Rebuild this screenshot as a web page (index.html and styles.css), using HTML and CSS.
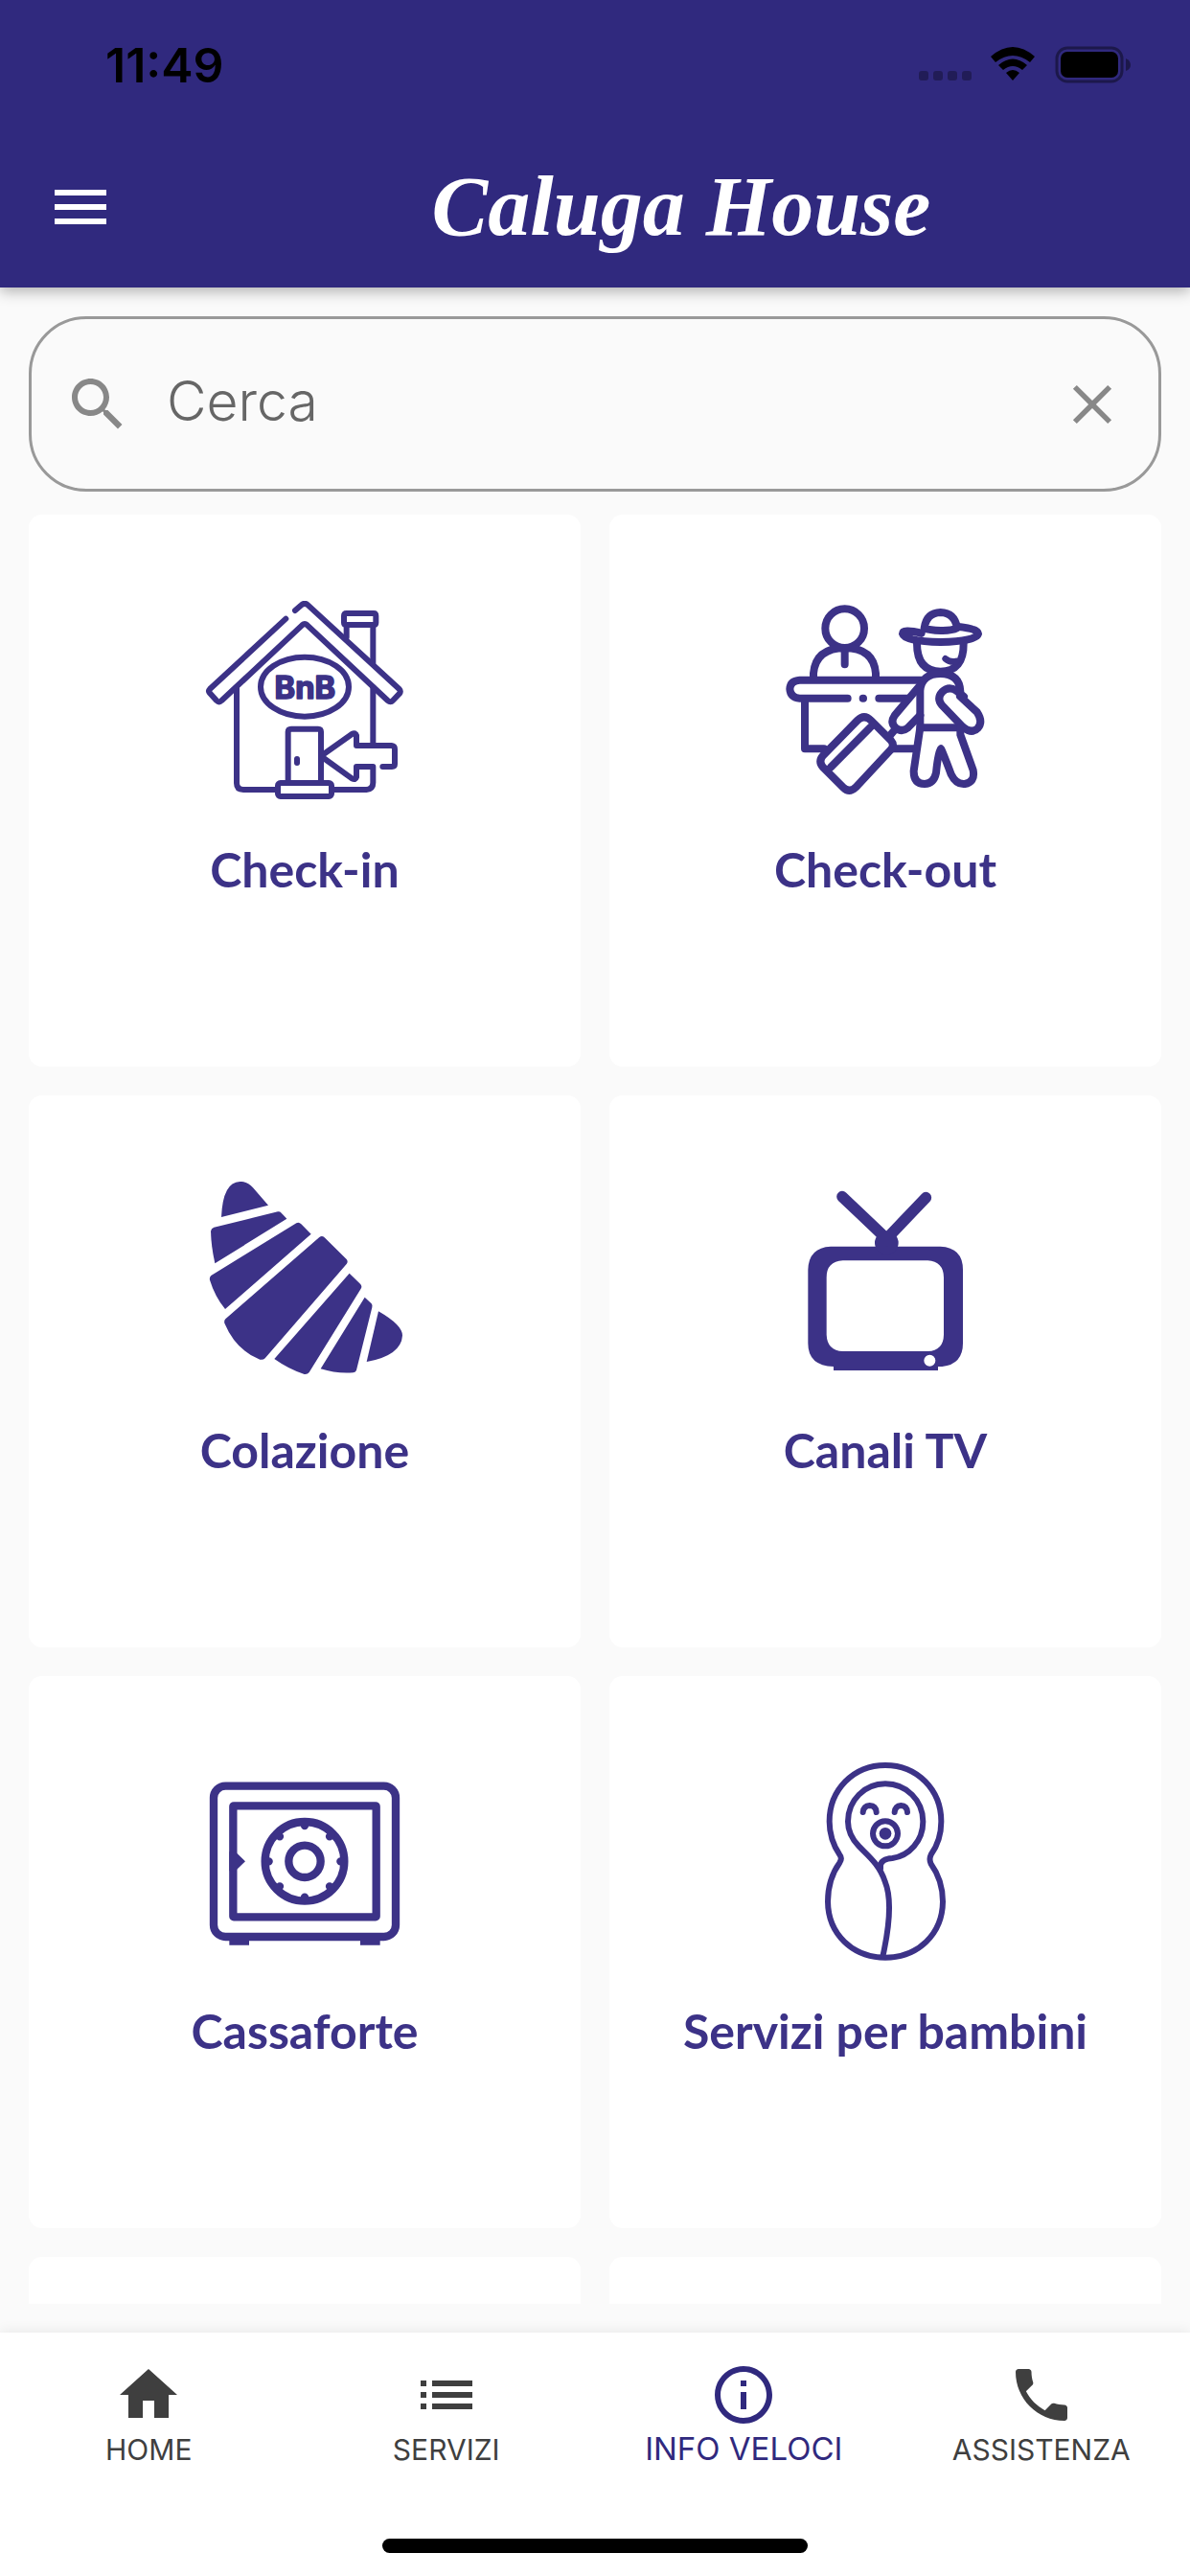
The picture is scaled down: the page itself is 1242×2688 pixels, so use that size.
FILE: index.html
```
<!DOCTYPE html>
<html lang="it">
<head>
  <meta charset="UTF-8" />
  <meta name="viewport" content="width=device-width, initial-scale=1.0"/>
  <title>Caluga House</title>
  <link rel="stylesheet" href="styles.css">
</head>
<body>
  <header>
    <div class="status-bar">
      <span class="clock">11:49</span>
      <svg class="status-icons" viewBox="0 0 224 40" aria-hidden="true">
        <g opacity="0.3">
          <rect x="3" y="26" width="10" height="10" rx="3"/>
          <rect x="18" y="26" width="10" height="10" rx="3"/>
          <rect x="33" y="26" width="10" height="10" rx="3"/>
          <rect x="48" y="26" width="10" height="10" rx="3"/>
        </g>
        <path d="M78 11 Q101 -9 124 11 L119 17 Q101 3 83 17 Z"/>
        <path d="M86 20 Q101 7 116 20 L111 25 Q101 17 91 25 Z"/>
        <path d="M94 28 Q101 22 108 28 L101 36 Z"/>
        <rect x="147" y="2" width="68" height="35" rx="11" fill="none" stroke="#000" stroke-width="3" opacity="0.4"/>
        <rect x="151" y="6" width="60" height="27" rx="7"/>
        <path d="M219 13 Q224 15 224 20 Q224 24 219 26 Z" opacity="0.4"/>
      </svg>
    </div>
    <div class="app-bar">
      <button class="icon-button" aria-label="Menu">
        <svg viewBox="0 0 24 24"><path d="M3 18h18v-2H3v2zm0-5h18v-2H3v2zm0-7v2h18V6H3z"/></svg>
      </button>
      <h1>Caluga House</h1>
    </div>
  </header>

  <main>
    <form class="search-box">
      <label for="search-input" aria-label="Cerca">
        <svg viewBox="0 0 24 24"><path d="M15.5 14h-.79l-.28-.27C15.41 12.59 16 11.11 16 9.5 16 5.91 13.09 3 9.5 3S3 5.91 3 9.5 5.91 16 9.5 16c1.61 0 3.09-.59 4.23-1.57l.27.28v.79l5 4.99L20.49 19l-4.99-5zm-6 0C7.01 14 5 11.99 5 9.5S7.01 5 9.5 5 14 7.01 14 9.5 11.99 14 9.5 14z"/></svg>
      </label>
      <input type="text" id="search-input" placeholder="Cerca" />
      <button type="reset" class="icon-button" aria-label="Cancella">
        <svg viewBox="0 0 24 24"><path d="M18.7 6.6l-1.3-1.3L12 10.7 6.6 5.3 5.3 6.6l5.4 5.4-5.4 5.4 1.3 1.3 5.4-5.4 5.4 5.4 1.3-1.3-5.4-5.4z"/></svg>
      </button>
    </form>

    <div class="cards">
      <a class="card" href="#checkin">
        <svg class="line" viewBox="72 81 624 624" stroke-width="18">
          <path d="M325 137 L87 357 Q81 363 87 370 L108 393 Q116 401 124 393 L376 157 Q384 150 392 157 L644 393 Q653 401 660 393 L681 371 Q686 364 680 357 L394 94 Q384 85 374 94 L354 111"/>
          <path d="M515 195 V158 M598 158 V275 M515 120 H600 Q607 120 607 128 V149 Q607 156 600 156 H515 Q507 156 507 149 V128 Q507 120 515 120 Z"/>
          <path d="M171 352 V652 Q171 672 192 672 H296 M598 352 V525 M475 672 H577 Q598 670 598 650 V600 H546 V633 Q543 643 532 637 L443 573 Q436 567 443 561 L532 498 Q543 492 546 502 V534 H656 Q666 535 666 545 V592 Q666 600 657 600 H628"/>
          <ellipse cx="384" cy="350" rx="138" ry="93"/>
          <path d="M332 642 V492 Q332 482 342 482 H426 Q435 482 435 492 V642"/>
          <rect x="300" y="651" width="168" height="42" rx="8"/>
          <path d="M360 576 V588"/>
          <text class="sign" x="385" y="388">BnB</text>
        </svg>
        <span>Check-in</span>
      </a>
      <a class="card" href="#checkout">
        <svg class="line" viewBox="90 81 624 624" stroke-width="24">
          <circle cx="275" cy="167" r="61"/>
          <path d="M177 322 V308 Q184 229 275 228 Q366 229 372 308 V322 M275 232 V280"/>
          <path d="M515 329 H134 Q104 331 103 357 Q105 384 134 386 H284 M332 386 H333 M382 386 H470 M150 388 V544 H210 M425 544 H492"/>
          <path d="M515 182 Q456 168 456 184 Q462 207 575 210 Q686 207 693 184 Q692 168 632 162 M524 166 Q531 118 575 117 Q619 118 627 166 Q610 175 575 174 Q540 173 524 166 Z"/>
          <path d="M501 214 Q501 302 575 302 Q648 302 647 214"/>
          <path d="M590 262 Q606 275 624 270" stroke-width="20"/>
          <path d="M511 478 V362 Q515 309 575 309 Q635 310 637 365 M511 478 H629"/>
          <path d="M511 345 L431 440 Q416 462 434 478 Q453 494 473 478 L511 439 M434 482 L416 503"/>
          <path d="M648 381 L624 362 Q600 347 580 366 Q562 386 579 407 L643 474 Q672 500 692 479 Q709 459 689 429 L636 380"/>
          <path d="M511 478 L491 613 Q490 653 525 654 Q554 653 561 619 Q568 550 576 544 Q580 550 608 624 Q624 657 651 654 Q684 648 677 611 L637 500 V478"/>
          <path d="M315 455 L207 565 Q191 583 207 602 L270 665 Q289 684 309 665 L420 546 Q432 532 419 517 L358 456 Q336 434 315 455 Z M358 474 L231 602"/>
        </svg>
        <span>Check-out</span>
      </a>
      <a class="card" href="#colazione">
        <svg class="solid" viewBox="72 99 624 624">
          <path d="M123 210 Q128 98 183 99 Q205 98 222 118 L270 173 Z"/>
          <path d="M100 242 L300 193 Q306 192 311 197 L328 215 L103 355 Q91 300 90 254 Q91 245 100 242 Z"/>
          <path d="M91 393 L358 229 Q366 224 373 232 L404 263 L135 498 Q103 459 87 407 Q85 398 91 393 Z"/>
          <path d="M136 529 L430 273 Q438 266 446 274 L515 342 Q521 349 515 357 L260 652 Q254 658 244 656 Q169 627 133 542 Q131 534 136 529 Z"/>
          <path d="M289 654 L524 386 L558 419 Q565 426 560 434 L398 696 Q393 703 383 702 Q334 686 289 654 Z"/>
          <path d="M434 685 L572 461 L593 481 Q597 486 595 493 L546 689 Q544 696 536 697 Q484 701 434 685 Z"/>
          <path d="M615 505 Q690 548 690 581 Q686 643 578 663 Z"/>
        </svg>
        <span>Colazione</span>
      </a>
      <a class="card" href="#tv">
        <svg class="solid" viewBox="90 99 624 624">
          <path fill-rule="evenodd" d="M231 302 H574 Q645 305 645 375 V605 Q645 670 580 678 H567 V690 H240 V678 Q160 675 160 605 V375 Q162 305 231 302 Z M269 346 Q218 349 218 399 V578 Q220 628 269 630 H535 Q584 628 585 578 V399 Q584 349 535 346 Z M541 641 A18 18 0 1 0 541 677 A18 18 0 1 0 541 641 Z"/>
          <circle cx="406" cy="291" r="37"/>
          <path class="antenna" d="M267 146 L406 278 L529 149"/>
        </svg>
        <span>Canali TV</span>
      </a>
      <a class="card" href="#cassaforte">
        <svg class="line" viewBox="72 57 624 624" stroke-width="25">
          <rect x="99" y="131" width="570" height="472" rx="37"/>
          <rect x="160" y="193" width="448" height="348" rx="2"/>
          <circle cx="384" cy="367" r="124"/>
          <circle cx="384" cy="367" r="50"/>
          <path d="M384 250 V255 M384 479 V484 M267 367 H272 M496 367 H501 M302 285 L306 289 M462 445 L466 449 M302 449 L306 445 M462 289 L466 285"/>
          <path class="fill" d="M148 337 H167 L198 367 L167 397 H148 Z M148 610 H210 V629 H148 Z M558 610 H620 V629 H558 Z"/>
        </svg>
        <span>Cassaforte</span>
      </a>
      <a class="card" href="#bambini">
        <svg class="line" viewBox="360 57 624 624" stroke-width="18">
          <path d="M672 66 C572 66 497 143 497 242 C497 285 509 316 529 346 Q538 357 529 371 Q492 422 492 493 C493 594 569 668 672 668 C775 668 851 594 852 493 Q852 426 815 375 Q808 360 815 346 C836 316 847 285 847 242 C847 143 772 66 672 66 Z"/>
          <path d="M665 660 Q700 500 671 430 C654 377 619 350 589 319 C567 296 555 272 555 242 C555 176 607 124 672 124 C738 124 790 176 790 242 C790 303 747 349 694 357 Q660 359 657 379 V390"/>
          <path d="M602 213 Q604 193 623 192 Q643 193 644 213 M701 213 Q703 193 721 192 Q740 193 741 213"/>
          <circle cx="672" cy="280" r="39"/>
          <circle class="fill" cx="672" cy="280" r="19"/>
        </svg>
        <span>Servizi per bambini</span>
      </a>
      <a class="card" href="#altro" aria-label="Altro"></a>
      <a class="card" href="#altro" aria-label="Altro"></a>
    </div>
  </main>

  <footer>
    <nav>
      <a href="#home">
        <svg viewBox="0 0 24 24"><path d="M10 20v-6h4v6h5v-8h3L12 3 2 12h3v8z"/></svg>
        <span>HOME</span>
      </a>
      <a href="#servizi">
        <svg viewBox="0 0 24 24"><path d="M3 13h2v-2H3v2zm0 4h2v-2H3v2zm0-8h2V7H3v2zm4 4h14v-2H7v2zm0 4h14v-2H7v2zM7 7v2h14V7H7z"/></svg>
        <span>SERVIZI</span>
      </a>
      <a href="#info" class="active">
        <svg viewBox="0 0 24 24"><path d="M11 17h2v-6h-2v6zm1-15C6.48 2 2 6.48 2 12s4.48 10 10 10 10-4.48 10-10S17.52 2 12 2zm0 18c-4.41 0-8-3.59-8-8s3.59-8 8-8 8 3.59 8 8-3.59 8-8 8zM11 9h2V7h-2v2z"/></svg>
        <span>INFO VELOCI</span>
      </a>
      <a href="#assistenza">
        <svg viewBox="0 0 24 24"><path d="M6.62 10.79c1.44 2.83 3.76 5.14 6.59 6.59l2.2-2.2c.27-.27.67-.36 1.02-.24 1.12.37 2.33.57 3.57.57.55 0 1 .45 1 1V20c0 .55-.45 1-1 1-9.39 0-17-7.61-17-17 0-.55.45-1 1-1h3.5c.55 0 1 .45 1 1 0 1.25.2 2.45.57 3.57.11.35.03.74-.25 1.02l-2.2 2.2z"/></svg>
        <span>ASSISTENZA</span>
      </a>
    </nav>
    <div class="home-indicator"></div>
  </footer>
</body>
</html>
```
FILE: styles.css
```
* {
  box-sizing: border-box;
}
body {
  display: flex;
  flex-direction: column;
  height: 100vh;
  margin: 0;
  background-color: #fafafa;
  color: #3f3f3f;
  font-family: Inter, 'Liberation Sans', sans-serif;
}
a {
  color: inherit;
  text-decoration: none;
}
button {
  padding: 0;
  border: none;
  background: none;
  cursor: pointer;
}
svg {
  display: block;
  fill: currentColor;
}

/* header */
header {
  position: relative;
  background-color: #30297e;
  color: white;
  box-shadow: 0 4px 14px rgba(0, 0, 0, 0.3);
}
.status-bar {
  display: flex;
  justify-content: space-between;
  align-items: center;
  height: 132px;
  padding: 4px 62px 0 110px;
  color: black;
}
.clock {
  font-size: 50px;
  font-weight: 600;
}
.status-icons {
  width: 224px;
  height: 40px;
}
.app-bar {
  display: flex;
  align-items: center;
  height: 168px;
  padding-left: 48px;
}
.icon-button {
  color: inherit;
}
.icon-button svg,
.search-box svg,
nav svg {
  width: 72px;
  height: 72px;
}
h1 {
  flex: 1;
  margin: 0 0 0 60px;
  font-family: 'Liberation Serif', serif;
  font-size: 88px;
  font-style: italic;
  font-weight: bold;
  line-height: 120px;
  text-align: center;
}

/* search and cards */
main {
  flex: 1;
  min-height: 0;
  margin: 30px;
  overflow: hidden;
}
.search-box {
  display: flex;
  align-items: center;
  height: 183px;
  padding: 0 33px;
  border: 3px solid #999;
  border-radius: 60px;
  color: #888;
}
.search-box input {
  flex: 1;
  min-width: 0;
  margin: 0 36px;
  padding: 0 0 6px;
  border: none;
  outline: none;
  background: none;
  font-family: Inter, sans-serif;
  font-size: 57px;
  font-weight: 300;
  color: #666;
}
.search-box input::placeholder {
  color: #666;
}
.cards {
  display: grid;
  grid-template-columns: 1fr 1fr;
  gap: 30px;
  margin-top: 24px;
}
.card {
  display: flex;
  flex-direction: column;
  align-items: center;
  aspect-ratio: 1;
  padding-top: 90px;
  border-radius: 14px;
  background-color: white;
  color: #3c3287;
}
.card svg {
  width: 208px;
  height: 208px;
}
.card span {
  margin-top: 40px;
  font-family: Lato, sans-serif;
  font-size: 50px;
  font-weight: 700;
  line-height: 64px;
}
.line {
  fill: none;
  stroke: currentColor;
  stroke-linecap: round;
  stroke-linejoin: round;
}
.line .fill {
  fill: currentColor;
  stroke: none;
}
.sign {
  fill: currentColor;
  stroke-width: 5;
  font-family: Inter, sans-serif;
  font-size: 98px;
  font-weight: 700;
  text-anchor: middle;
}
.antenna {
  fill: none;
  stroke: currentColor;
  stroke-width: 35;
  stroke-linecap: round;
}

/* bottom navigation */
footer {
  position: relative;
  height: 254px;
  background-color: white;
  box-shadow: 0 -2px 12px rgba(0, 0, 0, 0.07);
}
nav {
  display: grid;
  grid-template-columns: repeat(4, 1fr);
  height: 215px;
}
nav a {
  display: flex;
  flex-direction: column;
  align-items: center;
  padding-top: 29px;
}
nav span {
  font-size: 30px;
  line-height: 40px;
  margin-top: 1px;
}
nav .active {
  color: #30297e;
}
nav .active span {
  font-size: 33px;
  line-height: 38px;
}
.home-indicator {
  width: 444px;
  height: 15px;
  margin: 0 auto;
  border-radius: 8px;
  background-color: black;
}
```
